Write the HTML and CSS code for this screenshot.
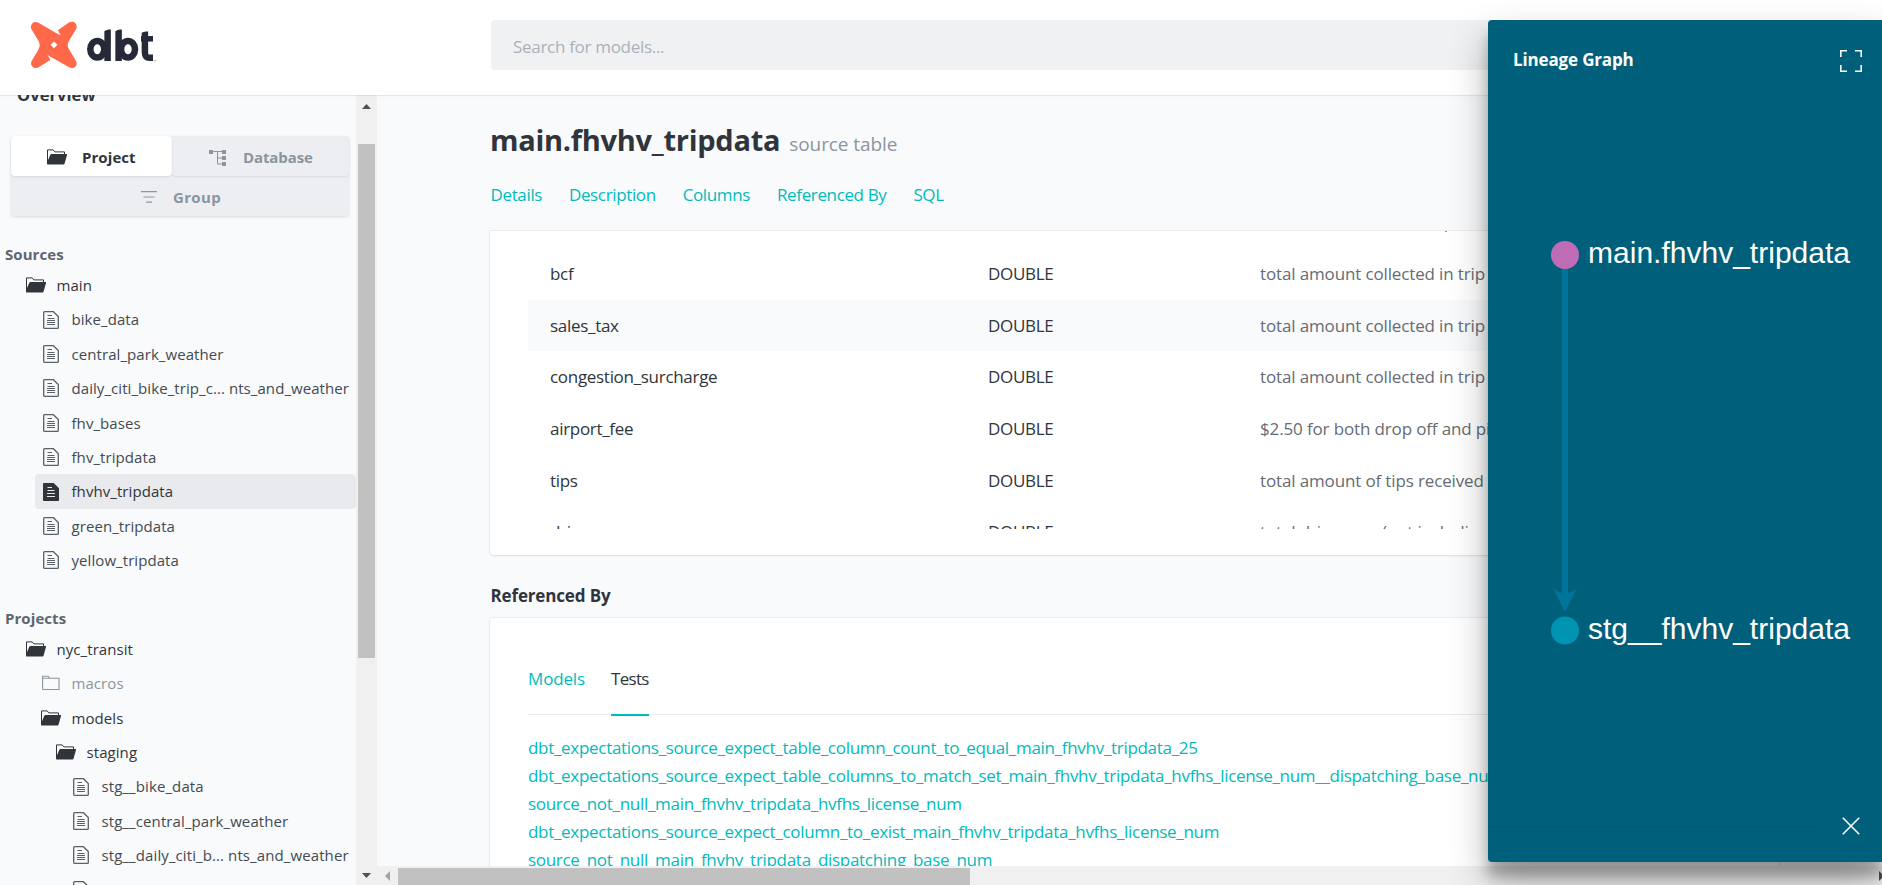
FILE: index.html
```html
<!DOCTYPE html>
<html lang="en">
<head>
<meta charset="utf-8">
<title>dbt Docs</title>
<link rel="stylesheet" href="styles.css">
</head>
<body>
<svg class="sprite" width="0" height="0" aria-hidden="true">
  <symbol id="folder-open" viewBox="0 0 20 16"><path fill="none" stroke="currentColor" stroke-width="1" d="M.5 14V.9h5.700l1.600 2h9.700V6"/><path fill="currentColor" d="M0 13.500 3.300 5.800c.3-.5.6-.8 1.200-.8H19.400c.5 0 .8.400.6.900l-2.400 8.700c-.2.600-.5.900-1.200.9H.8c-.5 0-.8-.5-.8-1z"/></symbol>
  <symbol id="folder" viewBox="0 0 20 16"><path fill="none" stroke="currentColor" stroke-width="1.100" d="M1.600 13.700V1.200h5.600l1.600 2.100H18v11.200H2.500c-.6 0-.9-.3-.9-.8zM1.600 3.300H9"/></symbol>
  <symbol id="file" viewBox="0 0 16 18"><path fill="none" stroke="currentColor" stroke-width="1.300" d="M1.600.7h8.800l4.900 4.800v10.900c0 .6-.3.900-.9.900H1.600c-.6 0-.9-.3-.9-.9V1.600c0-.6.3-.9.9-.9z"/><path stroke="currentColor" stroke-width="1" d="M4.500 4.500H9M4.500 7.500h7M4 9.500h8M4 11.500h8M4 13.500h8" fill="none"/></symbol>
  <symbol id="file-solid" viewBox="0 0 16 18"><path fill="currentColor" d="M1 0h9.700L16 5.200V17c0 .7-.3 1-1 1H1c-.7 0-1-.3-1-1V1c0-.7.3-1 1-1z"/><path stroke="#e9eaed" stroke-width="1" d="M4.500 4.500H9M4.500 7.500h7M4 10.500h8M4 13.500h8" fill="none"/></symbol>
</svg>

<header class="topbar">
  <svg class="logo" viewBox="-1 0 128 48" width="128" height="48">
    <g transform="translate(-.7 .6) scale(.975)">
      <path fill="#ff694a" d="M1.900 2.100C3.600.2 6.200.1 8.300 1.200L30.500 13.900 28.200 8.900 38.900 1.400C41.500-.3 45-.2 46.600 2.300 48.100 4.300 47.800 6.300 46.600 8.400L40.200 18.800C37.700 22.900 37.700 25 40.200 29.100L46.700 40.100C48 42.300 47.900 44.300 46.400 46 44.700 47.900 42.100 48.200 39.800 46.900L18 34.500 20.500 39.500 9 46.600C6.800 48 3.900 48.100 2.100 46.100.4 44.300.300 42 1.700 39.800L7.900 29.300C10.200 25.300 10.200 22.800 7.900 18.800L1.500 8.300C.2 6.100.3 3.900 1.900 2.100z"/>
      <path fill="#fff" d="M28.200 8.800 32 14.700l-4.700-5.700zM16.500 33.600l4.200 5.700-3.600-5.300zM24.300 20.300 27.800 23.800 24.300 27.300 20.800 23.800z"/>
    </g>
    <g fill="none" stroke="#262a38" stroke-width="6.500">
      <ellipse cx="66.300" cy="28.300" rx="7" ry="8.300"/><path d="M76.600 8.500V40"/>
      <ellipse cx="97" cy="28.300" rx="7" ry="8.300"/><path d="M87.600 8.500V40"/>
      <path d="M113.900 10.500V31c0 4 1.500 5.700 4.800 5.700h3.300"/><path stroke-width="5.500" d="M110 17.800h12"/>
    </g>
    <path fill="#fff" d="M73 7h7.200L73 10.300zM84 7h7.200L84 10.300zM110 9h7.500L110 12z"/>
    <path stroke="#8b8e97" stroke-width=".7" d="M123.300 39.500h2"/>
  </svg>
  <div class="search">Search for models...</div>
</header>

<div class="body">
  <aside class="sidebar">
    <div class="side-content">
      <div class="overview"><b>Overview</b></div>
      <div class="switch">
        <div class="tab on"><svg class="ic-folder"><use href="#folder-open"/></svg><span>Project</span></div>
        <div class="tab db"><svg width="17" height="17" viewBox="0 0 17 17"><path fill="currentColor" d="M0 1h4v4H0zM13 1h4v4h-4zM13 7h4v4h-4zM13 13h4v4h-4z"/><path fill="none" stroke="currentColor" d="M4 2.500h9M8.500 2.500v12.500H13M8.500 9H13"/></svg><span>Database</span></div>
        <div class="tab group"><svg width="16" height="12" viewBox="0 0 16 12"><path stroke="currentColor" stroke-width="1.200" d="M0 .7h16M2.500 6h11M5 11.200h6"/></svg><span>Group</span></div>
      </div>
      <h4 class="sources">Sources</h4>
      <div class="row l0"><svg class="ic-folder"><use href="#folder-open"/></svg><span>main</span></div>
      <div class="row file l1"><svg class="ic-file"><use href="#file"/></svg><span>bike_data</span></div>
      <div class="row file l1"><svg class="ic-file"><use href="#file"/></svg><span>central_park_weather</span></div>
      <div class="row file l1"><svg class="ic-file"><use href="#file"/></svg><span>daily_citi_bike_trip_c... nts_and_weather</span></div>
      <div class="row file l1"><svg class="ic-file"><use href="#file"/></svg><span>fhv_bases</span></div>
      <div class="row file l1"><svg class="ic-file"><use href="#file"/></svg><span>fhv_tripdata</span></div>
      <div class="row file l1 selected"><svg class="ic-file"><use href="#file-solid"/></svg><span>fhvhv_tripdata</span></div>
      <div class="row file l1"><svg class="ic-file"><use href="#file"/></svg><span>green_tripdata</span></div>
      <div class="row file l1"><svg class="ic-file"><use href="#file"/></svg><span>yellow_tripdata</span></div>
      <h4 class="projects">Projects</h4>
      <div class="row l0"><svg class="ic-folder"><use href="#folder-open"/></svg><span>nyc_transit</span></div>
      <div class="row l1 muted"><svg class="ic-folder"><use href="#folder"/></svg><span>macros</span></div>
      <div class="row l1"><svg class="ic-folder"><use href="#folder-open"/></svg><span>models</span></div>
      <div class="row l2"><svg class="ic-folder"><use href="#folder-open"/></svg><span>staging</span></div>
      <div class="row file l3"><svg class="ic-file"><use href="#file"/></svg><span>stg__bike_data</span></div>
      <div class="row file l3"><svg class="ic-file"><use href="#file"/></svg><span>stg__central_park_weather</span></div>
      <div class="row file l3"><svg class="ic-file"><use href="#file"/></svg><span>stg__daily_citi_b... nts_and_weather</span></div>
      <div class="row file l3"><svg class="ic-file"><use href="#file"/></svg><span>stg__fhv_bases</span></div>
    </div>
    <div class="vscroll">
      <svg width="9" height="5" viewBox="0 0 9 5"><path fill="#505050" d="M0 5 4.500 0 9 5z"/></svg>
      <div class="vthumb"></div>
      <svg class="down" width="9" height="5" viewBox="0 0 9 5"><path fill="#505050" d="M0 0h9L4.500 5z"/></svg>
    </div>
  </aside>

  <main class="main">
    <div class="page">
      <h1><span>main.fhvhv_tripdata</span><small>source table</small></h1>
      <nav class="links"><a>Details</a><a>Description</a><a>Columns</a><a>Referenced By</a><a>SQL</a></nav>
      <section class="card columns">
        <div class="rows">
          <div class="trow first"><span>tolls</span><span>DOUBLE</span><span class="desc">total amount of all tolls paid in trip</span></div>
          <div class="trow"><span>bcf</span><span>DOUBLE</span><span class="desc">total amount collected in trip for Black Car Fund</span></div>
          <div class="trow stripe"><span>sales_tax</span><span>DOUBLE</span><span class="desc">total amount collected in trip for NYS sales tax</span></div>
          <div class="trow"><span>congestion_surcharge</span><span>DOUBLE</span><span class="desc">total amount collected in trip for NYS congestion surcharge</span></div>
          <div class="trow"><span>airport_fee</span><span>DOUBLE</span><span class="desc">$2.50 for both drop off and pick up at the airports</span></div>
          <div class="trow"><span>tips</span><span>DOUBLE</span><span class="desc">total amount of tips received from passenger</span></div>
          <div class="trow"><span>driver_pay</span><span>DOUBLE</span><span class="desc">total driver pay (not including tolls or tips)</span></div>
        </div>
      </section>
      <h2>Referenced By</h2>
      <section class="card refs">
        <div class="reftabs"><a>Models</a><a class="active">Tests</a></div>
        <ul>
          <li>dbt_expectations_source_expect_table_column_count_to_equal_main_fhvhv_tripdata_25</li>
          <li>dbt_expectations_source_expect_table_columns_to_match_set_main_fhvhv_tripdata_hvfhs_license_num__dispatching_base_num</li>
          <li>source_not_null_main_fhvhv_tripdata_hvfhs_license_num</li>
          <li>dbt_expectations_source_expect_column_to_exist_main_fhvhv_tripdata_hvfhs_license_num</li>
          <li>source_not_null_main_fhvhv_tripdata_dispatching_base_num</li>
        </ul>
      </section>
    </div>
    <div class="hscroll">
      <svg width="5" height="10" viewBox="0 0 5 10"><path fill="#a3a3a3" d="M5 0v10L0 5z"/></svg>
      <div class="hthumb"></div>
      <svg class="right" width="5" height="10" viewBox="0 0 5 10"><path fill="#505050" d="M0 0v10l5-5z"/></svg>
    </div>
  </main>
</div>

<aside class="lineage">
  <div class="lin-head"><b>Lineage Graph</b>
    <svg width="22" height="22" viewBox="0 0 22 22"><path fill="none" stroke="#fff" stroke-width="1.600" d="M.8 7V.8H7M15 .8h6.200V7M.8 15v6.200H7M15 21.200h6.200V15"/></svg>
  </div>
  <svg class="graph" viewBox="0 0 394 680" width="394" height="680">
    <path fill="#007599" d="M74 149h6v324c4-1 8-3 9.500-6L77 492 64.500 467c2 3 5.500 5 9.500 6z"/>
    <circle cx="77" cy="135" r="14" fill="#bf6bb6"/>
    <circle cx="77" cy="510.500" r="14" fill="#0094b3"/>
    <text x="100" y="143" textLength="262">main.fhvhv_tripdata</text>
    <text x="100" y="519" textLength="262">stg__fhvhv_tripdata</text>
  </svg>
  <div class="lin-foot"><hr><svg width="18" height="18" viewBox="0 0 18 18"><path stroke="#fff" stroke-width="1.600" d="m.8.8 16.400 16.400M17.200.8.8 17.200"/></svg></div>
</aside>
</body>
</html>
```
FILE: styles.css
```css
* { box-sizing: border-box; }
body {
  margin: 0;
  width: 1882px;
  height: 885px;
  overflow: hidden;
  background: #f9fafc;
  color: #30353c;
  font-family: "Open Sans", "Noto Sans", sans-serif;
  font-size: 17px;
  letter-spacing: -.3px;
  display: flex;
  flex-direction: column;
}
.sprite { position: absolute; }
h1, h2, h4, ul { margin: 0; padding: 0; font-weight: 700; }

.topbar {
  flex: none;
  display: flex;
  align-items: flex-start;
  height: 95px;
  padding: 20px 0 0 30px;
  background: #fff;
  box-shadow: 0 1px 1px rgba(0, 0, 0, .08);
  z-index: 1;
}
.logo { margin-top: 1px; flex: none; }
.search {
  width: 1289px;
  height: 50px;
  margin-left: 333px;
  padding-left: 22px;
  border-radius: 4px;
  background: #f0f1f3;
  color: #a9b2bb;
  line-height: 53px;
}

.body { flex: 1; display: flex; min-height: 0; }
.sidebar { width: 377px; flex: none; display: flex; overflow: hidden; font-size: 15px; letter-spacing: .07px; }
.side-content { width: 356px; overflow: hidden; }
.overview { display: flow-root; height: 41px; padding-left: 17px; font-size: 16.500px; line-height: 24px; }
.overview b { display: block; margin-top: -12px; }
.switch {
  display: grid;
  grid-template-columns: 161px 177px;
  grid-template-rows: 40px 40px;
  width: 338px;
  margin-left: 11px;
  border-radius: 4px;
  background: #edeef2;
  box-shadow: 0 1px 3px rgba(0, 0, 0, .13);
}
.tab { display: flex; align-items: center; font-weight: 700; color: #8b959e; padding-top: 2px; }
.tab.on { background: #fff; color: #30353c; border-radius: 4px; padding-left: 36px; gap: 15px; box-shadow: 0 1px 2px rgba(0, 0, 0, .1); }
.tab.db { padding-left: 37px; gap: 17px; letter-spacing: -.1px; box-shadow: 0 1px 2px rgba(0, 0, 0, .08); border-radius: 4px; }
.tab.group { grid-column: 1 / 3; padding-left: 130px; gap: 16px; letter-spacing: .35px; }
h4 { font-size: 15px; line-height: 24px; color: #5f666e; }
.sources { margin: 26px 0 2px 5px; }
.projects { margin: 28.800px 0 1.600px 5px; }
.row { display: flex; align-items: center; height: 34.400px; border-radius: 4px; white-space: nowrap; }
.row span { line-height: 34.400px; }
.ic-folder { width: 20px; height: 16px; flex: none; }
.ic-file { width: 16px; height: 18px; flex: none; color: #5a6068; }
.l0 { padding-left: 26px; gap: 10.500px; }
.l1 { padding-left: 41px; gap: 10.500px; }
.l2 { padding-left: 56px; gap: 10.500px; }
.file { gap: 12.500px; color: #434a52; }
.file.l1 { margin-left: 35px; padding-left: 8px; }
.file.l3 { padding-left: 73px; letter-spacing: .1px; }
.muted { color: #8b959e; }
.selected { background: #e9eaed; color: #30353c; }
.selected .ic-file { color: #30353c; }
.vscroll { width: 21px; background: #f0f0f0; display: flex; flex-direction: column; align-items: center; padding-top: 9px; }
.vthumb { width: 17px; height: 514px; margin-top: 35px; background: #c1c1c1; }
.down { margin-top: 215px; }

.main { flex: 1; min-width: 0; display: flex; flex-direction: column; }
.page { flex: 1; min-height: 0; overflow: hidden; padding-left: 113px; }
h1 { display: flex; align-items: baseline; gap: 9px; height: 40px; margin: 25px 0 0; font-size: 29px; letter-spacing: -.27px; line-height: 40px; white-space: nowrap; }
h1 small { font-size: 19px; font-weight: 400; line-height: 1; letter-spacing: -.08px; color: #8b959e; }
.links { display: flex; gap: 26.900px; margin: 21px 0 0 .5px; color: #0bb; line-height: 28px; letter-spacing: -.36px; }
.card { width: 1289px; background: #fff; box-shadow: 0 0 1px 1px rgba(0, 0, 0, .05), 0 1px 3px rgba(0, 0, 0, .07); border-radius: 4px; }
.columns { height: 324px; margin-top: 22px; padding: 0 38px; border-radius: 0 0 4px 4px; }
.rows { height: 298px; overflow: hidden; }
.trow { display: grid; grid-template-columns: 438px 272px 1fr; height: 51.700px; padding-left: 22px; line-height: 52.500px; white-space: nowrap; overflow: hidden; }
.trow.first { margin-top: -34.700px; }
.desc { letter-spacing: -.14px; color: #666c73; }
.stripe { background: #f9fafc; }
h2 { margin: 27px 0 0 .5px; font-size: 17px; letter-spacing: -.15px; line-height: 28px; }
.refs { height: 400px; margin-top: 8px; padding: 48px 38px; color: #0bb; }
.reftabs { display: flex; gap: 26px; height: 49px; border-bottom: 1px solid #e8eaec; line-height: 26px; letter-spacing: -.15px; }
.reftabs a { height: 50px; }
.active { color: #30353c; border-bottom: 2px solid #0bb; letter-spacing: -.7px; }
.refs ul { margin-top: 19px; list-style: none; font-weight: 400; white-space: nowrap; line-height: 28px; }
.hscroll { flex: none; display: flex; align-items: center; height: 19px; padding-left: 8px; background: #f0f0f0; }
.hthumb { width: 572px; height: 17px; margin: 2px 0 0 8px; background: #c1c1c1; }
.right { margin-left: auto; margin-right: -2px; }

.lineage {
  position: absolute;
  left: 1488px;
  top: 20px;
  width: 394px;
  height: 842px;
  display: flex;
  flex-direction: column;
  justify-content: space-between;
  border-radius: 4px 0 0 4px;
  background: #005f7b;
  color: #fff;
  box-shadow: 0 19px 38px rgba(0, 0, 0, .3), 0 15px 12px rgba(0, 0, 0, .22);
  z-index: 2;
}
.lin-head { display: flex; justify-content: space-between; align-items: flex-start; padding: 30px 20px 0 25px; font-size: 17px; line-height: 20px; letter-spacing: -.15px; }
.graph { position: absolute; left: 0; top: 100px; }
.graph text { font: 30px "Liberation Sans", Arial, sans-serif; letter-spacing: 0; fill: #fff; }
.lin-foot { display: flex; justify-content: space-between; align-items: center; padding: 0 22px 27px 0; }
.lin-foot hr { width: 327px; margin: 0; border: 0; border-top: 1px solid #005a76; }
```
